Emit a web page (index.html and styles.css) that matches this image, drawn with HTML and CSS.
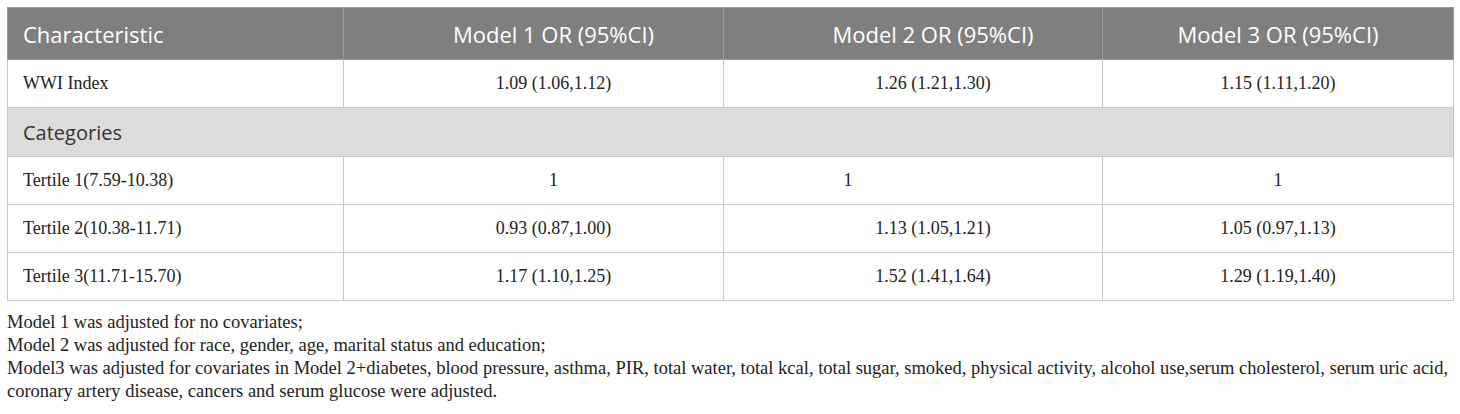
FILE: index.html
```html
<!DOCTYPE html>
<html lang="en">
<head>
<meta charset="utf-8">
<title>WWI Index table</title>
<link rel="stylesheet" href="styles.css">
</head>
<body>
<div class="wrap">
  <table class="data">
    <colgroup>
      <col class="c1"><col class="c2"><col class="c3"><col class="c4">
    </colgroup>
    <thead>
      <tr class="head">
        <th class="left">Characteristic</th>
        <th class="shift">Model 1 OR (95%CI)</th>
        <th class="shift">Model 2 OR (95%CI)</th>
        <th>Model 3 OR (95%CI)</th>
      </tr>
    </thead>
    <tbody>
      <tr class="row">
        <td class="left">WWI Index</td>
        <td class="shift">1.09 (1.06,1.12)</td>
        <td class="shift">1.26 (1.21,1.30)</td>
        <td>1.15 (1.11,1.20)</td>
      </tr>
      <tr class="cat">
        <td class="left" colspan="4">Categories</td>
      </tr>
      <tr class="row">
        <td class="left">Tertile 1(7.59-10.38)</td>
        <td class="shift">1</td>
        <td class="lefty">1</td>
        <td>1</td>
      </tr>
      <tr class="row">
        <td class="left">Tertile 2(10.38-11.71)</td>
        <td class="shift">0.93 (0.87,1.00)</td>
        <td class="shift">1.13 (1.05,1.21)</td>
        <td>1.05 (0.97,1.13)</td>
      </tr>
      <tr class="row">
        <td class="left">Tertile 3(11.71-15.70)</td>
        <td class="shift">1.17 (1.10,1.25)</td>
        <td class="shift">1.52 (1.41,1.64)</td>
        <td>1.29 (1.19,1.40)</td>
      </tr>
    </tbody>
  </table>
  <div class="notes">
    <p>Model 1 was adjusted for no covariates;</p>
    <p>Model 2 was adjusted for race, gender, age, marital status and education;</p>
    <p>Model3 was adjusted for covariates in Model 2+diabetes, blood pressure, asthma, PIR, total water, total kcal, total sugar, smoked, physical activity, alcohol use,serum cholesterol, serum uric acid, coronary artery disease, cancers and serum glucose were adjusted.</p>
  </div>
</div>
</body>
</html>
```

FILE: styles.css
```css
html, body {
  margin: 0;
  padding: 0;
  background: #ffffff;
}

.wrap {
  padding: 7px 8px 0 7px;
}

.data {
  width: 1446px;
  border-collapse: collapse;
  table-layout: fixed;
  border: 1px solid #c9c9c9;
}

.c1 { width: 336px; }
.c2 { width: 380px; }
.c3 { width: 379px; }
.c4 { width: 351px; }

.data th,
.data td {
  border: 1px solid #c9c9c9;
  text-align: center;
  vertical-align: middle;
  padding: 0 6px;
  white-space: nowrap;
}

.head th {
  height: 51px;
  background: #7f7f7f;
  color: #ffffff;
  font-family: "Open Sans", "Noto Sans", sans-serif;
  font-weight: 400;
  font-size: 22px;
  border-color: #9a9a9a;
}

.row td {
  height: 47px;
  font-family: "Liberation Serif", "Times New Roman", serif;
  font-size: 18px;
  color: #222222;
}

.cat td {
  height: 48px;
  background: #dddcdb;
  font-family: "Open Sans", "Noto Sans", sans-serif;
  font-size: 20px;
  color: #333333;
}

.data .left {
  text-align: left;
  padding-left: 15px;
}

.data .shift {
  padding-left: 46px;
}

.data .lefty {
  padding-right: 136px;
}

.notes {
  width: 1446px;
  margin-top: 10px;
  font-family: "Liberation Serif", "Times New Roman", serif;
  font-size: 18.5px;
  line-height: 23px;
  color: #222222;
}

.notes p {
  margin: 0;
}
```
